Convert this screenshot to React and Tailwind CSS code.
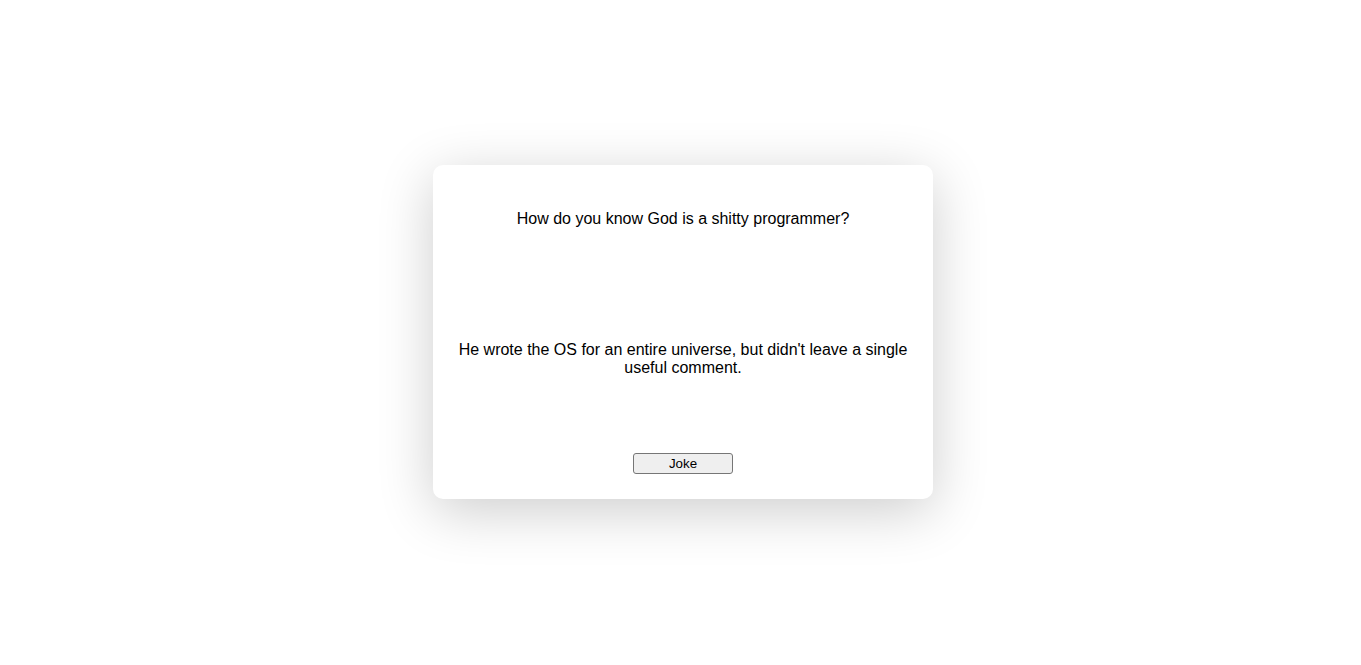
export default function App() {
  return (
    <div className="min-h-screen w-full bg-white flex items-center justify-center pl-[5px] pb-[1px] font-['Liberation_Sans',Arial,sans-serif] text-black">
      <div className="w-[500px] h-[334px] bg-white rounded-[10px] shadow-[0_12px_55px_rgba(0,0,0,0.2)] flex flex-col items-center px-[25px] pt-[45px] pb-[25px] text-center">
        <p className="text-[16px] leading-[18px]">How do you know God is a shitty programmer?</p>
        <p className="mt-[113px] text-[16px] leading-[18px]">
          He wrote the OS for an entire universe, but didn't leave a single useful comment.
        </p>
        <button className="mt-auto w-[100px] h-[21px] bg-[#efefef] border border-[#767676] rounded-[3px] text-[13.33px] leading-none">
          Joke
        </button>
      </div>
    </div>
  );
}
